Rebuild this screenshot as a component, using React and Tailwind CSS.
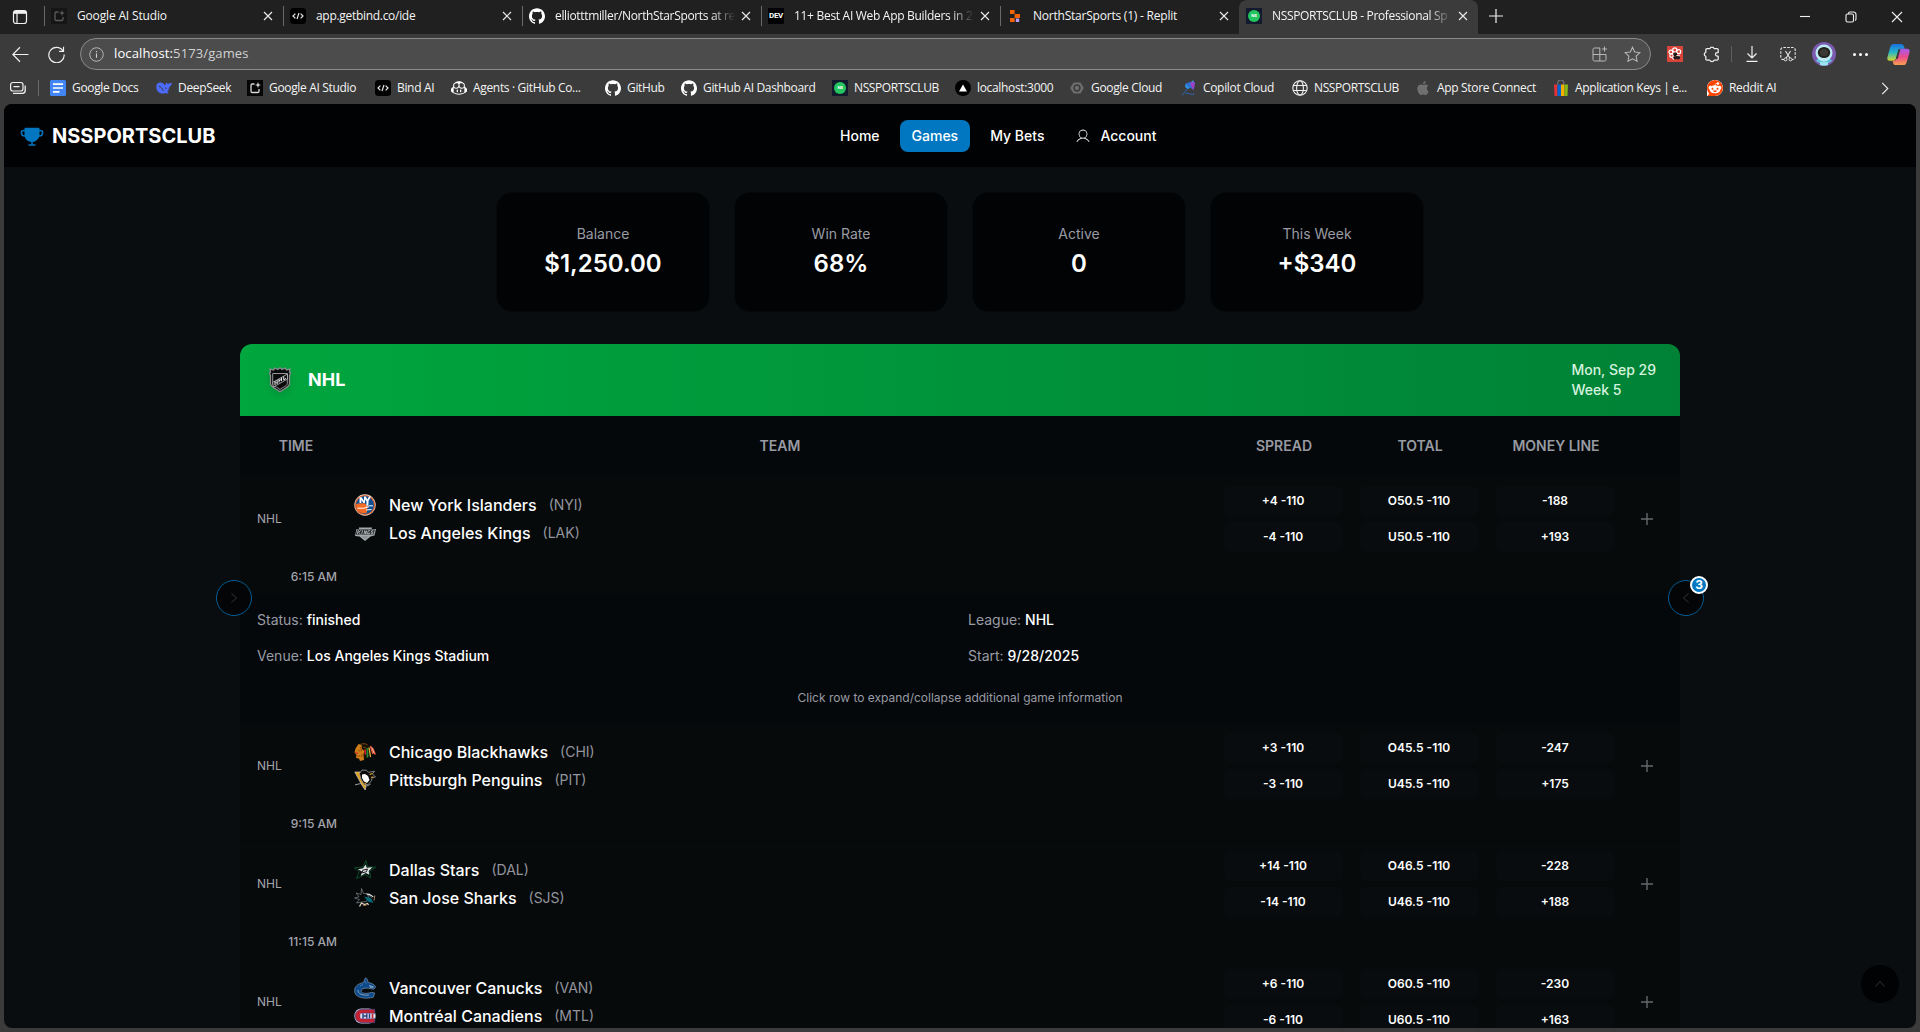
import React from "react";
import { SiGithub, SiGithubcopilot, SiApple, SiReddit, SiVercel } from "react-icons/si";
import { PiTrophyFill, PiUserLight } from "react-icons/pi";

const S = ({ children, vb = "0 0 16 16", className = "w-4 h-4" }) => (
  <svg viewBox={vb} className={"shrink-0 " + className} fill="none">{children}</svg>
);

/* ---------- small brand marks ---------- */
const StudioIcon = ({ dim }) => (
  <S>
    <rect width="16" height="16" fill={dim ? "#151515" : "#050505"} />
    <g stroke={dim ? "#5c5c5c" : "#d8d8d8"} strokeWidth="1.3">
      <path d="M7.5 4H5.3A1.3 1.3 0 0 0 4 5.3v5.9a1.3 1.3 0 0 0 1.3 1.3h5.4a1.3 1.3 0 0 0 1.3-1.3V9" />
    </g>
    <path d="M11 2l.8 2.2L14 5l-2.2.8L11 8l-.8-2.2L8 5l2.2-.8z" fill={dim ? "#5c5c5c" : "#d8d8d8"} />
  </S>
);
const CodeIcon = () => (
  <S>
    <rect width="16" height="16" rx="3.5" fill="#000" />
    <path d="M5.4 5.6L3 8l2.400 2.400M10.600 5.600L13 8l-2.400 2.400M9 5l-2 6" stroke="#e5e5e5" strokeWidth="1.2" />
  </S>
);
const Github = () => <SiGithub className="w-4 h-4 shrink-0 text-white" />;
const NsIcon = () => (
  <S>
    <rect width="16" height="16" fill="#131a2e" />
    <circle cx="8" cy="8" r="6" fill="#22c55e" />
    <text x="8" y="9.3" fontSize="4" fontWeight="700" fill="#fff" textAnchor="middle" fontFamily="Inter, sans-serif">NS</text>
  </S>
);
const DevIcon = () => (
  <span className="w-4 h-4 shrink-0 bg-black flex items-center justify-center text-white font-bold text-[8px] leading-none font-['Roboto',sans-serif] tracking-[-0.3px]">DEV</span>
);
const ReplitIcon = () => (
  <S>
    <path d="M3 2h4.600v4H3zM7.600 6H13v4H7.600zM3 10h4.600v4H3z" fill="#f26207" />
    <rect x="8.8" y="10.4" width="3.4" height="3.6" rx=".6" fill="#b79cf7" />
  </S>
);
const DocsIcon = () => (
  <S>
    <rect width="16" height="16" rx="1.5" fill="#4285f4" />
    <path d="M3 4.200h10M3 8h10M3 11.800h6.500" stroke="#fff" strokeWidth="1.7" />
  </S>
);
const DeepSeekIcon = () => (
  <S>
    <path d="M.3 6.500c.2-2.400 1.800-4 4-4 2.200 0 3.700 1.200 4.700 3 .9-.7.500-2.200 1.200-3.300.5 1.100 1.200 1.600 2.200 1.500 1.200-.2 2-.8 3.500-.6-.3 2-1.300 3.200-2.700 3.800-.1 2.200-.9 3.700-2 4.800l1.600 1.300c-1.500.6-2.700.5-3.600-.1C5.500 14.800.1 12.500.3 6.500z" fill="#4d6bfe" />
    <path d="M2.800 6.300c2 0 3.600 2.200 4.600 4.700M9 7.800c.7 0 1.300.5 1.500 1.200" stroke="#3b3b3b" strokeWidth="1" />
  </S>
);
const VercelIcon = () => (
  <span className="w-4 h-4 shrink-0 rounded-full bg-black flex items-center justify-center text-white">
    <SiVercel className="w-2 h-2" />
  </span>
);
const CloudIcon = () => (
  <S>
    <path d="M4.600 2.500h6.800L14.800 8l-3.400 5.500H4.600L1.200 8z" fill="#6f6f6f" />
    <circle cx="8" cy="8" r="2.900" stroke="#3b3b3b" strokeWidth="1.500" />
  </S>
);
const CopilotCloudIcon = () => (
  <S>
    <path d="M4.500 3.500L9.500 2l4.500.5-1.300 7.500L9 7.500z" fill="#2f6fdb" />
    <path d="M9.500 2l4.500.5-1.300 7.500L10 6z" fill="#a03fc0" />
    <path d="M10 2l2.500-2v2.300z" fill="#3aa0e8" />
    <path d="M4.500 3.500l4.500 4L7 9.500 4 7z" fill="#2f8fe0" />
    <path d="M7 8L1 15.500M4.500 13.500c3-1.500 5 2 9 .5" stroke="#2c6ac4" strokeWidth=".9" />
  </S>
);
const GlobeIcon = () => (
  <S>
    <g stroke="#f0f0f0" strokeWidth="1.100">
      <circle cx="8" cy="8" r="7.200" />
      <ellipse cx="8" cy="8" rx="3.400" ry="7.200" />
      <path d="M1.300 5.500h13.400M1.300 10.500h13.400" />
    </g>
  </S>
);
const EbayIcon = () => (
  <S>
    <path d="M4.800 5V3a3 3 0 0 1 6 0v2" stroke="#777" strokeWidth="1.100" />
    <path d="M1 4.500h3.500V16H1.500z" fill="#e53238" />
    <path d="M4.500 4.500H8V16H4.500z" fill="#0064d2" />
    <path d="M8 4.500h3.500V16H8z" fill="#f5af02" />
    <path d="M11.500 4.500H15L14.500 16h-3z" fill="#86b817" />
  </S>
);
const RedditIcon = () => (
  <span className="w-4 h-4 shrink-0"><SiReddit className="w-4 h-4 text-[#ff4500] bg-white rounded-full rounded-bl-none" /></span>
);

/* ---------- team crests ---------- */
const L = "w-[22px] h-[22px]";
const crests = {
  NYI: (
    <S vb="0 0 22 22" className={L}>
      <circle cx="11" cy="11" r="10.700" fill="#e9d9cf" />
      <circle cx="11" cy="11" r="10.100" fill="#d9622f" />
      <circle cx="11" cy="11" r="8.900" fill="#0b4f94" />
      <path d="M2.200 10c3-1 6-.8 9-.5l2.500 3-1 6.500c-4 1.300-9-1-10.500-5z" fill="#f26a24" />
      <path d="M5.500 9V3.200h2l2.500 3.500V2.600h1.800l1.500 2.900 1.700-2.900h2L14.500 7v3.500l-2 2.500V7.600L11 5.500V9H9.500L7.300 6v3z" fill="#fff" />
      <path d="M3.500 14.200h6.500l5 -1.500M14.500 11.800h4.500M12 16l5.500-.5" stroke="#fff" strokeWidth="1" />
    </S>
  ),
  LAK: (
    <S vb="0 0 22 22" className={L}>
      <path d="M5 5.500h13l-.3 1.500H22l-1.500 6.500-4 1-5.500 4.500-5.500-4.500-4.500-.500L2.500 7H5z" fill="#a4a9ac" />
      <path d="M3.300 7.500h17.500l-1.200 5H1.800z" fill="#1d2022" />
      <path d="M4.500 8l-1.200 4M7.300 8.200L4.500 10.300l2 1.800M8.700 8.200l-1 3.800M10 12l.8-3.500 1 3.500.8-3.500M16.200 8.700h-2l-.7 3h2l.3-1.300M19.500 8.700h-1.700l-.4 1.500h1.500l-.4 1.500h-1.700" stroke="#b9bdbf" strokeWidth=".9" />
      <path d="M7 14.300h8l-4 3.300z" fill="#8c9194" />
    </S>
  ),
  CHI: (
    <S vb="0 0 22 22" className={L}>
      <path d="M5 3C8 .8 13 1.500 15 4.500L16.500 12l-3 5-4 1-5-8z" fill="#1c1206" />
      <path d="M1.500 7.500L4.500 3l3 1 .5 4 2.500 2-1 3.500.5 5.500-4 1-1-2.500-3-.5.5-3-2-2.500z" fill="#cc7d18" />
      <path d="M4 9.500l2.500.500M3.500 15h3M6.500 6l1 4M8 13v3" stroke="#8a470c" strokeWidth=".9" />
      <path d="M1.500 11.500l2.500 1" stroke="#d4202c" strokeWidth="1.300" />
      <path d="M6.500 3.500c3-1.500 5-1 7 .5M9 6l3 1" stroke="#7a5316" strokeWidth=".8" />
      <path d="M11 8.500l.5 5" stroke="#d4202c" strokeWidth="1.700" />
      <path d="M13.300 7l.2 9.500" stroke="#1f8a3a" strokeWidth="1.700" />
      <path d="M15 6.500l1.500 9.500" stroke="#e3b53a" strokeWidth="1.300" />
      <path d="M16.500 5l2.500 8M18.500 7l2.700 6.500" stroke="#e8583a" strokeWidth="1.700" />
      <path d="M17.700 6l2.300 6" stroke="#f4d9c8" strokeWidth=".7" />
    </S>
  ),
  PIT: (
    <S vb="0 0 22 22" className={L}>
      <path d="M.8 3h5.400l7 8-2 10-3.400-5z" fill="#e0a41c" stroke="#c8c8c8" strokeWidth=".7" />
      <path d="M5.500 4.500l2.500-3.500 4.500.3 2 2 6-1-2 2.700 3 3-3.500.7-.5 3-3 3.500-4 .8L6.800 10z" fill="#0a0a0a" stroke="#9a9da1" strokeWidth=".8" />
      <path d="M8 5.500l3-.5 3 2 1.500 4-2.500 3-3-1.500-2-3.500z" fill="#fff" />
      <path d="M15.500 5.500l3-1M17 8.300l2.500-.3M10.500 14l1.500 1" stroke="#e8aa1c" strokeWidth="1.100" />
      <path d="M1 15.800l6-1.300M12.500 17.200l4-2" stroke="#9a9da1" strokeWidth="1" />
    </S>
  ),
  DAL: (
    <S vb="0 0 22 22" className={L}>
      <path d="M12 1.500l1.500 6.300 8.200.4-6.200 4.100 1.300 6.700-5.800-3.500L2.500 19.500l2.700-7L.5 8.700l8.300-.7z" fill="#050b08" stroke="#0d5231" strokeWidth=".9" />
      <path d="M11.500 5.500l1.300 3.200 5.700-.5-3.800 3.700.6 3.900-3.600-1.800-5 3 1.500-4.300L4 10.200l5.200-1z" fill="#dfe2e3" />
      <path d="M8.800 11.200l4.700-1.200-1.200 2.800-4 1z" stroke="#1b1b1b" strokeWidth="1" />
    </S>
  ),
  SJS: (
    <S vb="0 0 22 22" className={L}>
      <path d="M7.500 1.500l2 5 4 .5 1 3.500-2 4L8 15l-5.500 1 3-3.500L.5 11l4.500-1.200L2 6l5 1.500z" fill="#060708" stroke="#7e878a" strokeWidth=".7" />
      <path d="M10 9.500l7 1.500 2.500 5-5.500-1.200z" fill="#006874" />
      <path d="M11.500 6.500l4 .2 4.300 2.800-2.300 1z" fill="#dfe4e5" />
      <path d="M14.500 8.500l3.500 1.300" stroke="#0a0c0d" strokeWidth=".8" />
      <path d="M20.800 8.500l-.8 5" stroke="#a98058" strokeWidth="1" />
      <path d="M5.500 19.500l2-3.500 3 1.500 3-1 1 1.500" stroke="#ddd0bc" strokeWidth="1.300" />
      <path d="M9 18.500l3.500-.3" stroke="#b87a34" strokeWidth=".9" />
    </S>
  ),
  VAN: (
    <S vb="0 0 22 22" className={L}>
      <path d="M11.500 .8c2 .8 2.600 2.800 2.300 4.700 3.500.3 6.500 1.700 7.900 4.500l-2 2.300-5-1c-5-.7-8 .9-7.500 3.200.7 2.300 6 2.300 10.500.8l3 .7-1.300 4.200C10.500 22.500.5 21 .6 13.500.7 9.500 4 6.500 9.300 5.700z" fill="#0d4a8a" stroke="#7d8fa8" strokeWidth=".7" />
      <path d="M15.500 8.500l4 1.500-3 .5zM4 13c-.5 4 5 5.800 11 5" stroke="#b9c7d6" strokeWidth=".7" />
      <path d="M10.500 3.500l1.500 3M6 9l3-1.500" stroke="#3f77b0" strokeWidth="1" />
    </S>
  ),
  MTL: (
    <S vb="0 0 22 22" className={L}>
      <rect x=".4" y="3.400" width="21.200" height="15.200" rx="7" fill="#dcd9e6" />
      <path d="M20.800 4.200H9C4.300 4.200 1.200 7 1.200 11s3.100 6.800 7.800 6.800h11.800v-4.100H10c-2.800 0-4-1-4-2.700s1.200-2.700 4-2.700h10.800z" fill="#c42133" stroke="#2b3f80" strokeWidth=".7" />
      <path d="M6.300 8.600h12.500v4.800H6.300z" fill="#dcd9e6" />
      <path d="M9 8.400v5.200M12.800 8.400v5.200M9 11h3.800M15.500 8.400v5.200" stroke="#2b3f80" strokeWidth="1.400" />
      <path d="M18.500 8.500v5" stroke="#c42133" strokeWidth="1.600" />
    </S>
  ),
};

const NhlShield = () => (
  <S vb="0 0 24 26" className="w-6 h-[26px] drop-shadow-md">
    <path d="M12 .8l2.200 1.700L17 1l1.500 2 3.500-.8-.5 3 1 1-1 2v8.500c0 3.500-6 5-9.500 8-3.500-3-9.500-4.500-9.500-8V8.200l-1-2 1-1-.5-3L5.500 3 7 1l2.800 1.500z" fill="#0a0a0a" stroke="#8b8b90" strokeWidth="1.300" />
    <path d="M4.700 6.500h14.600v10c0 2.500-4.500 3.500-7.300 6-2.800-2.500-7.300-3.500-7.300-6z" stroke="#a5a5aa" strokeWidth=".9" />
    <path d="M4.500 15.500L19.500 7v5L5.500 20z" fill="#111" stroke="#c0c0c4" strokeWidth=".8" />
    <path d="M7 18v-3.500l2.200 2.200v-3.500M11 15.500V12M13.500 14v-3.500M11 13.800l2.500-1.500M15.700 9.500v3.300l2.300-1.300" stroke="#e5e5e8" strokeWidth="1" />
  </S>
);

/* ---------- browser chrome ---------- */
const X = () => (
  <S vb="0 0 10 10" className="w-[10px] h-[10px]">
    <path d="M1 1l8 8M9 1L1 9" stroke="#e8e8e8" strokeWidth="1.200" />
  </S>
);

const tabs = [
  { icon: <StudioIcon dim />, title: "Google AI Studio", track: "tracking-[-0.16px]" },
  { icon: <CodeIcon />, title: "app.getbind.co/ide", track: "tracking-[-0.3px]" },
  { icon: <Github />, title: "elliotttmiller/NorthStarSports at re", track: "tracking-[-0.34px]", fade: true },
  { icon: <DevIcon />, title: "11+ Best AI Web App Builders in 2", track: "tracking-[-0.3px]", fade: true },
  { icon: <ReplitIcon />, title: "NorthStarSports (1) - Replit", track: "tracking-[-0.22px]" },
  { icon: <NsIcon />, title: "NSSPORTSCLUB - Professional Sp", track: "tracking-[-0.35px]", active: true, fade: true },
];

const bookmarks = [
  ["w-[106px]", <DocsIcon />, "Google Docs"],
  ["w-[91px]", <DeepSeekIcon />, "DeepSeek"],
  ["w-[128px]", <StudioIcon />, "Google AI Studio"],
  ["w-[76px]", <CodeIcon />, "Bind AI"],
  ["w-[154px]", <SiGithubcopilot className="w-4 h-4 shrink-0 text-white" />, "Agents · GitHub Co..."],
  ["w-[76px]", <Github />, "GitHub"],
  ["w-[151px]", <Github />, "GitHub AI Dashboard"],
  ["w-[123px] tracking-[-0.4px]", <NsIcon />, "NSSPORTSCLUB"],
  ["w-[114px]", <VercelIcon />, "localhost:3000"],
  ["w-[112px]", <CloudIcon />, "Google Cloud"],
  ["w-[111px]", <CopilotCloudIcon />, "Copilot Cloud"],
  ["w-[123px] tracking-[-0.4px]", <GlobeIcon />, "NSSPORTSCLUB"],
  ["w-[138px]", <SiApple className="w-4 h-[14px] shrink-0 text-[#707070]" />, "App Store Connect"],
  ["w-[154px] tracking-[-0.38px]", <EbayIcon />, "Application Keys | e..."],
  ["w-[80px]", <RedditIcon />, "Reddit AI"],
];

function TabStrip() {
  return (
    <div className="flex h-[34px] bg-[#202020]">
      <div className="w-11 flex items-center pl-3">
        <S className="w-4 h-4">
          <rect x="1.500" y="1.500" width="13" height="13" rx="2.500" stroke="#f0f0f0" strokeWidth="1.200" />
          <path d="M1.500 4.200h13M5 4.200v10" stroke="#f0f0f0" strokeWidth="1.200" />
          <path d="M2 2h12v2.200H2z" fill="#f0f0f0" />
        </S>
      </div>
      {tabs.map((t) => (
        <div
          key={t.title}
          className={
            "w-[239px] flex items-center pb-[2px] pl-[7px] pr-[10px] " +
            (t.active ? "bg-[#3b3b3b] rounded-t-lg" : "")
          }
        >
          {!t.active && <div className="w-px h-[20px] -ml-[7px] mr-[6px] bg-[#6a6a6a]" />}
          {t.icon}
          <div
            className={
              "ml-[10px] flex-1 whitespace-nowrap text-[12px] text-[#f4f4f4] " +
              (t.fade ? "[mask-image:linear-gradient(to_right,#000_84%,transparent_97%)] " : "") +
              t.track
            }
          >
            {t.title}
          </div>
          <X />
        </div>
      ))}
      <div className="w-9 flex items-center justify-center pb-[2px]">
        <S vb="0 0 14 14" className="w-[14px] h-[14px]"><path d="M7 0v14M0 7h14" stroke="#f0f0f0" strokeWidth="1.200" /></S>
      </div>
      <div className="flex-1" />
      <div className="flex w-[138px] items-center">
        {[
          <path key="a" d="M1 5.500h10" />,
          <g key="b"><rect x="1" y="3" width="7.500" height="8" rx="1.500" /><path d="M3.500 3V2.500A1.500 1.500 0 0 1 5 1h3.500A2.500 2.500 0 0 1 11 3.500V8a1.500 1.500 0 0 1-1 1.400" /></g>,
          <path key="c" d="M1 1l10 10M11 1L1 11" />,
        ].map((p, i) => (
          <div key={i} className="w-[46px] flex justify-center">
            <S vb="0 0 12 12" className="w-3 h-3"><g stroke="#f0f0f0" strokeWidth="1.100">{p}</g></S>
          </div>
        ))}
      </div>
    </div>
  );
}

function Toolbar() {
  return (
    <div className="flex h-10 items-center">
      <div className="w-10 flex justify-center">
        <S className="w-[17px] h-[17px]"><path d="M15.500 8H1M7.500 1.200L.8 8l6.700 6.800" stroke="#f0f0f0" strokeWidth="1.100" /></S>
      </div>
      <div className="w-8 flex justify-center">
        <S className="w-[17px] h-[17px]"><path d="M14 4.500A7.200 7.200 0 1 0 15.200 8M14.600.8v4.200h-4.200" stroke="#f0f0f0" strokeWidth="1.100" /></S>
      </div>
      <div className="ml-2 w-[1571px] h-8 rounded-full border border-[#8a8a8a] bg-[#4c4c4c] flex items-center px-2">
        <S className="w-[15px] h-[15px]">
          <circle cx="8" cy="8" r="7.200" stroke="#bdbdbd" />
          <path d="M8 7v4.500M8 4.300v1.400" stroke="#d0d0d0" strokeWidth="1.200" />
        </S>
        <div className="ml-[10px] text-[13px] tracking-[0.12px] text-[#d2d2d2]"><span className="text-white">localhost:</span>5173/games</div>
        <div className="flex-1" />
        <S className="w-4 h-4 mr-4">
          <g stroke="#b8b8b8" strokeWidth="1">
            <path d="M8 2H2.500A1.500 1.500 0 0 0 1 3.500v10A1.500 1.500 0 0 0 2.500 15h10a1.500 1.500 0 0 0 1.500-1.500V8.500H1M7.800 2v13M12.500.5v5M10 3h5" />
          </g>
        </S>
        <S className="w-[17px] h-[17px] mr-px">
          <path d="M8 1.200l2.100 4.400 4.800.6-3.500 3.300.9 4.800L8 12l-4.300 2.300.9-4.800L1.100 6.200l4.800-.6z" stroke="#b8b8b8" strokeWidth="1" />
        </S>
      </div>
      <div className="w-[48px] flex justify-center">
        <S>
          <rect width="16" height="16" fill="#d9443a" />
          <g stroke="#fff" strokeWidth="1.200">
            <circle cx="7.800" cy="3.900" r="2.100" /><circle cx="3.900" cy="6" r="1.900" /><circle cx="11.700" cy="5.700" r="2" /><circle cx="4.500" cy="9.700" r="1.700" /><path d="M5.500 12l1.500 1.500" />
          </g>
          <circle cx="8.300" cy="8.500" r="1.900" fill="#1a1a1a" /><circle cx="11" cy="11.500" r="2.100" fill="#1a1a1a" /><circle cx="8" cy="11.800" r="1.600" fill="#1a1a1a" />
          <path d="M9.500 9.500l3.500.3" stroke="#fff" strokeWidth=".9" />
        </S>
      </div>
      <div className="w-[26px] flex justify-center">
        <S className="w-[18px] h-[18px]"><path d="M3.500 3.200h2.600a2 2 0 0 1 3.800 0h2.600a1 1 0 0 1 1 1v2.500h-.8a1.600 1.600 0 0 0 0 3.200h.8v2.500a1 1 0 0 1-1 1H9.900a2 2 0 0 1-3.800 0H3.500a1 1 0 0 1-1-1V10a1.800 1.800 0 0 1 0-3.500V4.200a1 1 0 0 1 1-1z" stroke="#f0f0f0" strokeWidth="1.100" strokeLinejoin="round" /></S>
      </div>
      <div className="w-px h-4 bg-[#5e5e5e] ml-[6px]" />
      <div className="w-[40px] flex justify-center">
        <S className="w-4 h-4"><path d="M8 0v12M3.500 7.500L8 12l4.500-4.500M2.500 15.300h11" stroke="#f0f0f0" strokeWidth="1.200" /></S>
      </div>
      <div className="w-[32px] flex justify-center">
        <S className="w-4 h-4">
          <path d="M4 13.500H3A2.200 2.200 0 0 1 .8 11.300V3.700A2.200 2.200 0 0 1 3 1.500h10a2.200 2.200 0 0 1 2.200 2.200v7.600a2.200 2.200 0 0 1-2.200 2.200h-1" stroke="#e8e8e8" strokeWidth="1.100" strokeDasharray="2.600 1.200" />
          <path d="M5.500 5l4.300 7M10.500 5l-4.300 7" stroke="#e8e8e8" strokeWidth="1.100" />
          <circle cx="5.500" cy="13.400" r="1.500" stroke="#e8e8e8" /><circle cx="10.500" cy="13.400" r="1.500" stroke="#e8e8e8" />
        </S>
      </div>
      <div className="w-[40px] flex justify-center">
        <S vb="0 0 24 24" className="w-6 h-6">
          <circle cx="12" cy="12" r="12" fill="#7b5bb0" />
          <path d="M4 19c1-4 15-4 16 0a12 12 0 0 1-16 0z" fill="#5ec4dc" />
          <circle cx="12" cy="11" r="8.500" fill="#bdeaf5" />
          <ellipse cx="12" cy="10.500" rx="6.200" ry="5.500" fill="#22221f" /><ellipse cx="12" cy="10.500" rx="4" ry="3.500" fill="#3a3934" />
          <path d="M8 20h8v3a12 12 0 0 1-8 0z" fill="#9be3ef" />
        </S>
      </div>
      <div className="w-[32px] flex justify-center gap-[3px]">
        <i className="w-[3px] h-[3px] rounded-full bg-white" /><i className="w-[3px] h-[3px] rounded-full bg-white" /><i className="w-[3px] h-[3px] rounded-full bg-white" />
      </div>
      <div className="flex-1 flex justify-center">
        <S vb="0 0 24 24" className="w-[23px] h-[23px]">
          <defs>
            <linearGradient id="ca" x1="0" y1="0" x2="0" y2="1"><stop stopColor="#1b6fe0" /><stop offset=".5" stopColor="#26b6c8" /><stop offset="1" stopColor="#d8d62a" /></linearGradient>
            <linearGradient id="cb" x1="0" y1="0" x2="0" y2="1"><stop stopColor="#a45bf0" /><stop offset=".5" stopColor="#ec4a8e" /><stop offset="1" stopColor="#f9a04a" /></linearGradient>
          </defs>
          <path d="M7 1h8c1.500 0 2.300 1 2.700 2.500L18.500 6h-4c-1.500 0-2.200 1-2.600 2.500L9.500 16c-.5 1.700-1.400 2.500-3 2.500H3c-2.500 0-3-2-2.500-4l3-10.500C4.200 2 5.200 1 7 1z" fill="url(#ca)" />
          <path d="M17 23H9c-1.500 0-2.300-1-2.700-2.500L5.800 18.500h1.700c1.500 0 2.200-1 2.600-2.500L12.500 8.500C13 6.800 14 6 15.500 6H21c2.500 0 3 2 2.500 4l-3 10c-.6 2-1.700 3-3.500 3z" fill="url(#cb)" />
          <path d="M13 6.500L10.200 16.500" stroke="#3b3b3b" strokeWidth="2" />
        </S>
      </div>
    </div>
  );
}

function Bookmarks() {
  return (
    <div className="flex h-[30px] items-center pb-[2px] text-[12px] tracking-[-0.33px] text-[#f4f4f4]">
      <div className="w-[38px] pl-[10px]">
        <S className="w-4 h-4">
          <rect x=".6" y="2.500" width="12.400" height="8.500" rx="2.200" stroke="#f0f0f0" strokeWidth="1.200" />
          <path d="M3.500 6.700h6M3 13.300h9.500c1.700 0 2.700-1 2.700-2.700V5.500" stroke="#f0f0f0" strokeWidth="1.300" />
        </S>
      </div>
      <div className="w-px h-4 bg-[#6a6a6a] mr-[11px]" />
      {bookmarks.map(([w, icon, label], i) => (
        <div key={i} className={"flex items-center gap-[6px] shrink-0 whitespace-nowrap " + w}>
          {icon}
          <span>{label}</span>
        </div>
      ))}
      <div className="flex-1" />
      <S vb="0 0 8 14" className="w-2 h-[13px] mr-[31px]"><path d="M1 1l6 6-6 6" stroke="#f0f0f0" strokeWidth="1.200" /></S>
    </div>
  );
}

/* ---------- page ---------- */
const stats = [
  ["Balance", "$1,250.00"],
  ["Win Rate", "68%"],
  ["Active", "0"],
  ["This Week", "+$340"],
];

const games = [
  { time: "6:15 AM", teams: [["New York Islanders", "NYI"], ["Los Angeles Kings", "LAK"]], odds: [["+4 -110", "-4 -110"], ["O50.5 -110", "U50.5 -110"], ["-188", "+193"]], open: true },
  { time: "9:15 AM", teams: [["Chicago Blackhawks", "CHI"], ["Pittsburgh Penguins", "PIT"]], odds: [["+3 -110", "-3 -110"], ["O45.5 -110", "U45.5 -110"], ["-247", "+175"]] },
  { time: "11:15 AM", teams: [["Dallas Stars", "DAL"], ["San Jose Sharks", "SJS"]], odds: [["+14 -110", "-14 -110"], ["O46.5 -110", "U46.5 -110"], ["-228", "+188"]] },
  { time: "", teams: [["Vancouver Canucks", "VAN"], ["Montréal Canadiens", "MTL"]], odds: [["+6 -110", "-6 -110"], ["O60.5 -110", "U60.5 -110"], ["-230", "+163"]] },
];

function GameRow({ g }) {
  return (
    <div className="flex h-[118px] border-b border-[#05080a] bg-[#060a0b]">
      <div className="w-[114px] pl-[17px] pr-[17px] pt-[35px] text-xs text-[#a3a4ac]">
        <div className="h-[58px]">NHL</div>
        <div className="text-right font-medium">{g.time}</div>
      </div>
      <div className="flex-1 pt-[15px]">
        {g.teams.map(([name, code]) => (
          <div key={code} className="flex h-7 items-center">
            {crests[code]}
            <span className="ml-[13px] text-base font-medium text-white">{name}</span>
            <span className="ml-3 text-sm text-[#93949d]">({code})</span>
          </div>
        ))}
      </div>
      <div className="flex gap-[18px] pt-[10px]">
        {g.odds.map((col, i) => (
          <div key={i} className="flex w-[118px] flex-col gap-[6px]">
            {col.map((o) => (
              <div key={o} className="flex h-[30px] items-center justify-center rounded-md bg-[#080c0e] text-xs font-semibold text-white">{o}</div>
            ))}
          </div>
        ))}
      </div>
      <div className="flex h-[86px] w-[66px] items-center justify-center">
        <S vb="0 0 12 12" className="w-3 h-3"><path d="M6 0v12M0 6h12" stroke="#66686c" strokeWidth="1.400" /></S>
      </div>
    </div>
  );
}

const Info = ({ k, v }) => (
  <div className="text-[#9a9ba4]">{k}: <span className="font-medium text-white">{v}</span></div>
);

function GamesTable() {
  return (
    <section className="mx-auto mt-8 w-[1440px] overflow-hidden rounded-t-xl bg-[#060a0b]">
      <div className="flex h-[72px] items-center bg-linear-to-r from-[#00a63e] to-[#008236] px-6 pl-[28px]">
        <NhlShield />
        <span className="ml-4 text-lg font-bold text-white">NHL</span>
        <div className="ml-auto text-sm font-medium leading-5 text-[#d6f3df]">
          <div>Mon, Sep 29</div>
          <div>Week 5</div>
        </div>
      </div>
      <div className="flex h-[60px] items-center bg-[#04080b] text-sm font-semibold text-[#989aa1]">
        <div className="w-[112px] text-center">TIME</div>
        <div className="flex-1 pr-2 text-center">TEAM</div>
        <div className="w-[136px] text-center">SPREAD</div>
        <div className="w-[136px] text-center">TOTAL</div>
        <div className="w-[136px] text-center">MONEY LINE</div>
        <div className="w-[56px]" />
      </div>
      {games.map((g) => (
        <React.Fragment key={g.teams[0][1]}>
          <GameRow g={g} />
          {g.open && (
            <div className="h-[129px] bg-[#04080b] px-[17px] pt-[16px] text-sm">
              <div className="grid grid-cols-2 gap-y-4 gap-x-4">
                <Info k="Status" v="finished" />
                <Info k="League" v="NHL" />
                <Info k="Venue" v="Los Angeles Kings Stadium" />
                <Info k="Start" v="9/28/2025" />
              </div>
              <div className="mt-[24px] text-center text-xs text-[#9a9ba4]">Click row to expand/collapse additional game information</div>
            </div>
          )}
        </React.Fragment>
      ))}
    </section>
  );
}

export default function App() {
  return (
    <div className="flex h-[1032px] w-[1920px] flex-col overflow-hidden bg-[#3b3b3b] font-['Open_Sans','Noto_Sans',sans-serif]">
      <TabStrip />
      <Toolbar />
      <Bookmarks />
      <div className="relative mx-1 h-[924px] overflow-hidden rounded-lg bg-[#090d10] font-['Inter',sans-serif]">
        <header className="flex h-16 items-center border-b border-[#0b0c10] bg-[#010203] px-4">
          <div className="flex w-[808px] items-center">
            <PiTrophyFill className="h-6 w-6 text-[#0077c0]" />
            <span className="ml-2 text-xl font-bold text-white">NSSPORTSCLUB</span>
          </div>
          <nav className="flex items-center gap-2 text-sm font-medium text-white">
            <span className="flex h-8 items-center px-3">Home</span>
            <span className="flex h-8 items-center rounded-lg bg-[#0077c0] px-3">Games</span>
            <span className="flex h-8 items-center px-3">My Bets</span>
            <span className="flex h-8 items-center gap-[9px] pl-[11px]"><PiUserLight className="h-4 w-4" />Account</span>
          </nav>
        </header>
        <div className="mx-auto mt-6 grid w-[928px] grid-cols-4 gap-6">
          {stats.map(([k, v]) => (
            <div key={k} className="flex h-[120px] flex-col items-center rounded-2xl border border-[#06090b] bg-[#010304] pt-[31px]">
              <div className="text-sm text-[#9a9ba4]">{k}</div>
              <div className="mt-1 text-2xl font-semibold text-white">{v}</div>
            </div>
          ))}
        </div>
        <GamesTable />

        {/* floating drawer handles and scroll-to-top button */}
        <div className="absolute left-[212px] top-[476px] flex h-9 w-9 items-center justify-center rounded-full border border-[#005d96] bg-[#030506]">
          <S vb="0 0 6 10" className="w-[6px] h-[10px]"><path d="M.5.5L5.500 5l-5 4.500" stroke="#3a3c40" strokeWidth=".9" /></S>
        </div>
        <div className="absolute left-[1664px] top-[476px] flex h-9 w-9 items-center justify-center rounded-full border border-[#005d96] bg-[#030506]">
          <S vb="0 0 6 10" className="w-[6px] h-[10px]"><path d="M5.500.5L.5 5l5 4.500" stroke="#3a3c40" strokeWidth=".9" /></S>
          <span className="absolute -top-[5px] left-[21px] flex h-[18px] w-[18px] items-center justify-center rounded-full border-2 border-white bg-[#0077c0] text-xs font-bold leading-none text-white">3</span>
        </div>
        <div className="absolute left-[1857px] top-[861px] flex h-[38px] w-[38px] items-center justify-center rounded-full bg-[#010203]">
          <S vb="0 0 10 6" className="w-[10px] h-[6px]"><path d="M.5 5.500L5 .5l4.500 5" stroke="#3a3c40" strokeWidth=".9" /></S>
        </div>
      </div>
    </div>
  );
}
